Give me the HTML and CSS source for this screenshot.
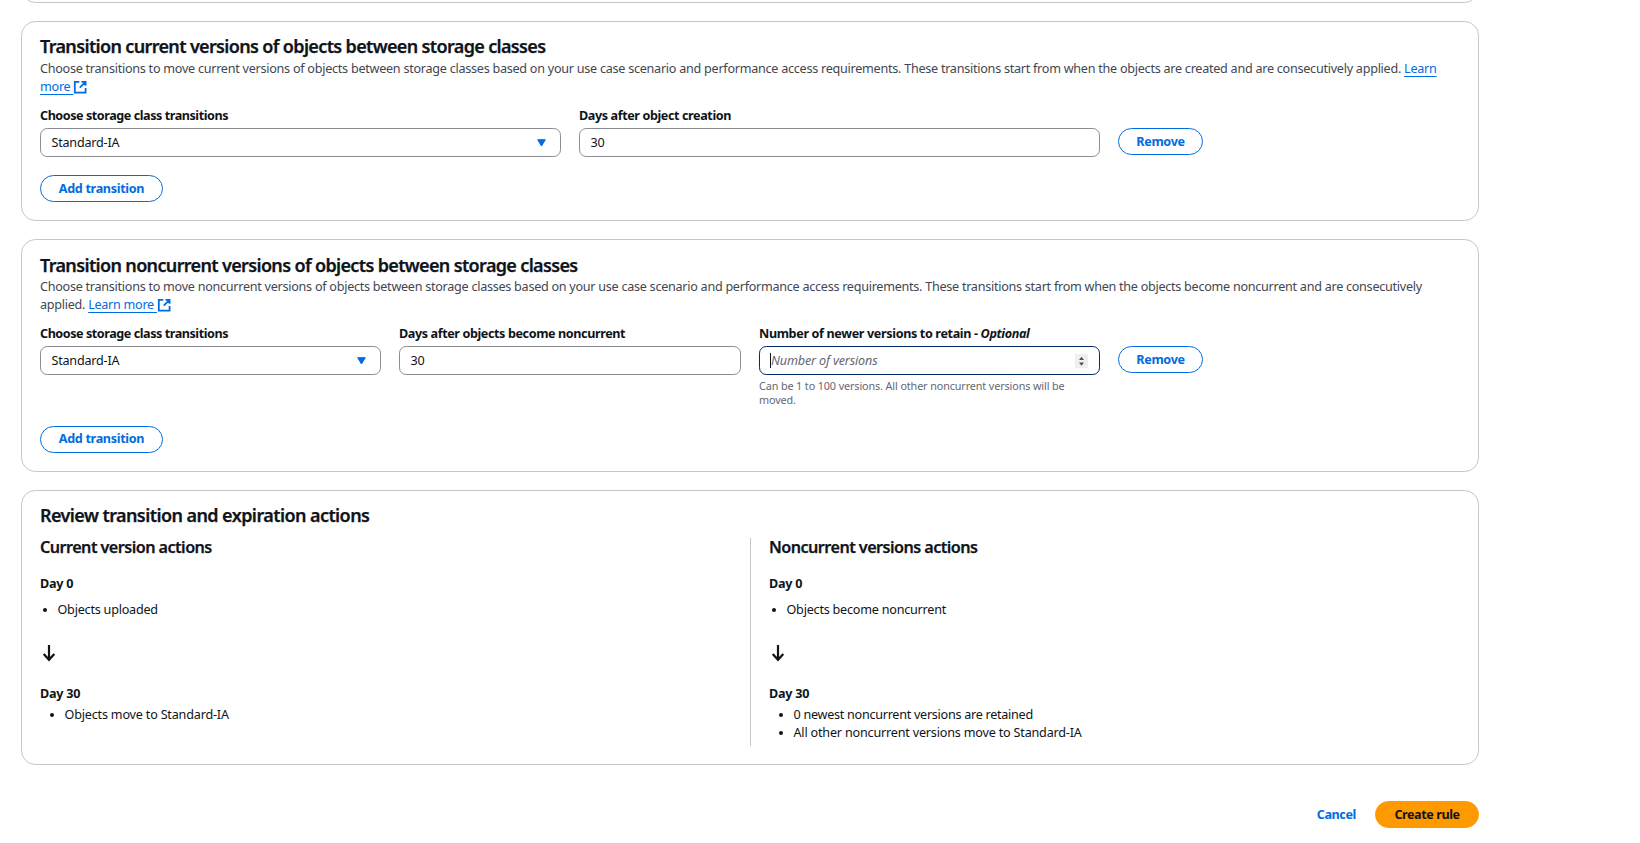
FILE: index.html
```html
<!DOCTYPE html>
<html lang="en">
<head>
<meta charset="utf-8">
<title>Create lifecycle rule</title>
<link rel="stylesheet" href="styles.css">
</head>
<body>
<main class="page">
  <section class="card card-previous"></section>

  <section class="card">
    <h2 class="title">Transition current versions of objects between storage classes</h2>
    <p class="description">Choose transitions to move current versions of objects between storage classes based on your use case scenario and performance access requirements. These transitions start from when the objects are created and are consecutively applied. <a class="link">Learn<br>more </a><svg class="external" viewBox="0 0 16 16"><path d="M7 2H2v12h12V9M9.500 2H14v4.500M14 2 7.500 8.500"/></svg></p>
    <div class="fields fields-two">
      <div class="field">
        <div class="label">Choose storage class transitions</div>
        <div class="control select"><span>Standard-IA</span><svg class="caret" viewBox="0 0 9 8"><path d="M.7.7h7.600L4.500 7z"/></svg></div>
      </div>
      <div class="field">
        <div class="label label-days">Days after object creation</div>
        <div class="control"><span>30</span></div>
      </div>
      <button class="button remove">Remove</button>
    </div>
    <button class="button add">Add transition</button>
  </section>

  <section class="card">
    <h2 class="title title-low">Transition noncurrent versions of objects between storage classes</h2>
    <p class="description description-long">Choose transitions to move noncurrent versions of objects between storage classes based on your use case scenario and performance access requirements. These transitions start from when the objects become noncurrent and are consecutively<br>applied. <a class="link">Learn more </a><svg class="external" viewBox="0 0 16 16"><path d="M7 2H2v12h12V9M9.500 2H14v4.500M14 2 7.500 8.500"/></svg></p>
    <div class="fields fields-three">
      <div class="field">
        <div class="label">Choose storage class transitions</div>
        <div class="control select"><span>Standard-IA</span><svg class="caret" viewBox="0 0 9 8"><path d="M.7.7h7.600L4.500 7z"/></svg></div>
      </div>
      <div class="field">
        <div class="label label-days">Days after objects become noncurrent</div>
        <div class="control"><span>30</span></div>
      </div>
      <div class="field">
        <div class="label label-retain">Number of newer versions to retain - <i>Optional</i></div>
        <div class="control focused"><span class="placeholder">Number of versions</span><svg class="spinner" viewBox="0 0 13 14"><path d="M4 6 6.500 2.700 9 6zM4 8.500 6.500 11.800 9 8.500z"/></svg></div>
        <div class="constraint">Can be 1 to 100 versions. All other noncurrent versions will be<br>moved.</div>
      </div>
      <button class="button remove">Remove</button>
    </div>
    <button class="button add">Add transition</button>
  </section>

  <section class="card">
    <h2 class="title title-review">Review transition and expiration actions</h2>
    <div class="columns">
      <div class="column">
        <h3 class="subtitle">Current version actions</h3>
        <div class="day">Day 0</div>
        <ul class="list"><li>Objects uploaded</li></ul>
        <svg class="arrow" viewBox="0 0 18 18"><path d="M9 1v14.500M3.700 10 9 15.800 14.300 10"/></svg>
        <div class="day">Day 30</div>
        <ul class="list list-nested"><li>Objects move to Standard-IA</li></ul>
      </div>
      <div class="column column-divided">
        <h3 class="subtitle">Noncurrent versions actions</h3>
        <div class="day">Day 0</div>
        <ul class="list"><li>Objects become noncurrent</li></ul>
        <svg class="arrow" viewBox="0 0 18 18"><path d="M9 1v14.500M3.700 10 9 15.800 14.300 10"/></svg>
        <div class="day">Day 30</div>
        <ul class="list list-nested"><li class="retained">0 newest noncurrent versions are retained</li><li>All other noncurrent versions move to Standard-IA</li></ul>
      </div>
    </div>
  </section>

  <footer class="actions">
    <a class="cancel">Cancel</a>
    <button class="button primary">Create rule</button>
  </footer>
</main>
</body>
</html>
```
FILE: styles.css
```css
* { box-sizing: border-box; }

body {
  margin: 0;
  height: 843px;
  overflow: hidden;
  background: #fff;
  color: #0f141a;
  font: 12.6px/18px "Noto Sans", "Open Sans", sans-serif;
  letter-spacing: -0.22px;
}

h2, h3, p, ul { margin: 0; }

.page {
  width: 1458px;
  margin-left: 21px;
  display: flex;
  flex-direction: column;
  gap: 18px;
}

.card {
  border: 1px solid #c6c6cd;
  border-radius: 14.4px;
  padding: 13px 18px 18px;
}

.card-previous { height: 40px; margin-top: -37px; }

.title {
  font-size: 18px;
  line-height: 22px;
  font-weight: 600;
  letter-spacing: -0.65px;
  -webkit-text-stroke: 0.25px #0f141a;
  margin-bottom: 2px;
}

.title-low { padding-top: 1px; margin-bottom: 1px; }

.title-review { letter-spacing: -0.58px; margin-bottom: 12px; }

.description {
  color: #424650;
  letter-spacing: -0.258px;
  white-space: nowrap;
  padding-top: 1px;
  margin-bottom: 10px;
}

.description-long { letter-spacing: -0.267px; }

.link {
  color: #006ce0;
  text-decoration: underline;
  text-decoration-thickness: 1px;
  text-underline-offset: 3px;
  white-space: pre-wrap;
}

.external {
  width: 14.4px;
  height: 14.4px;
  vertical-align: -3px;
  fill: none;
  stroke: #006ce0;
  stroke-width: 2;
}

.fields { display: grid; gap: 18px; margin-bottom: 18px; }
.fields-two { grid-template-columns: 521px 521px auto; }
.fields-three { grid-template-columns: 341px 342px 341px auto; }

.label {
  font-weight: 700;
  letter-spacing: -0.45px;
  padding-top: 1px;
  margin-bottom: 3px;
  white-space: nowrap;
}

.label-days { letter-spacing: -0.4px; }
.label-retain { letter-spacing: -0.36px; }

.control {
  height: 29px;
  border: 1px solid #8c8c94;
  border-radius: 7.2px;
  padding: 0 14px 0 10.5px;
  display: flex;
  align-items: center;
  justify-content: space-between;
}

.focused { border-color: #002b66; padding: 0 11px 0 10px; }

.placeholder {
  color: #656871;
  font-style: italic;
  letter-spacing: -0.15px;
  border-left: 1px solid #0f141a;
  line-height: 15px;
}

.caret { width: 9px; height: 8px; fill: #006ce0; stroke: #006ce0; stroke-linejoin: round; }

.spinner { width: 13px; height: 14px; background: #efefef; fill: #505050; }

.constraint {
  color: #656871;
  font-size: 10.8px;
  line-height: 14.4px;
  letter-spacing: -0.114px;
  margin-top: 4px;
  white-space: nowrap;
}

.button {
  display: block;
  height: 27px;
  padding: 0;
  border: 1px solid #006ce0;
  border-radius: 18px;
  background: #fff;
  color: #006ce0;
  font: inherit;
  font-weight: 700;
  letter-spacing: -0.32px;
}

.remove { width: 85px; margin-top: 22px; }
.add { width: 123px; }
.primary { width: 104px; padding-top: 1px; background: #ff9900; border-color: #ff9900; color: #0f141a; letter-spacing: -0.42px; }

.columns { display: grid; grid-template-columns: 710px 1fr; height: 208px; }
.column-divided { border-left: 1px solid #c6c6cd; padding-left: 18px; }

.subtitle {
  font-size: 16.2px;
  line-height: 18px;
  font-weight: 600;
  letter-spacing: -0.55px;
  -webkit-text-stroke: 0.25px #0f141a;
  margin-bottom: 19px;
}

.day { font-weight: 700; letter-spacing: -0.25px; }

.list { padding-left: 17.5px; margin-top: 8px; }
.list-nested { padding-left: 24.5px; margin-top: 3px; letter-spacing: -0.19px; }
.retained { letter-spacing: -0.27px; }

.arrow {
  display: block;
  width: 18px;
  height: 18px;
  margin: 25px 0 23px;
  fill: none;
  stroke: #0f141a;
  stroke-width: 2.2;
}

.actions {
  display: flex;
  justify-content: flex-end;
  align-items: center;
  gap: 19px;
  margin-top: 18px;
}

.cancel { color: #006ce0; font-weight: 700; letter-spacing: -0.38px; padding-top: 2px; }
```
